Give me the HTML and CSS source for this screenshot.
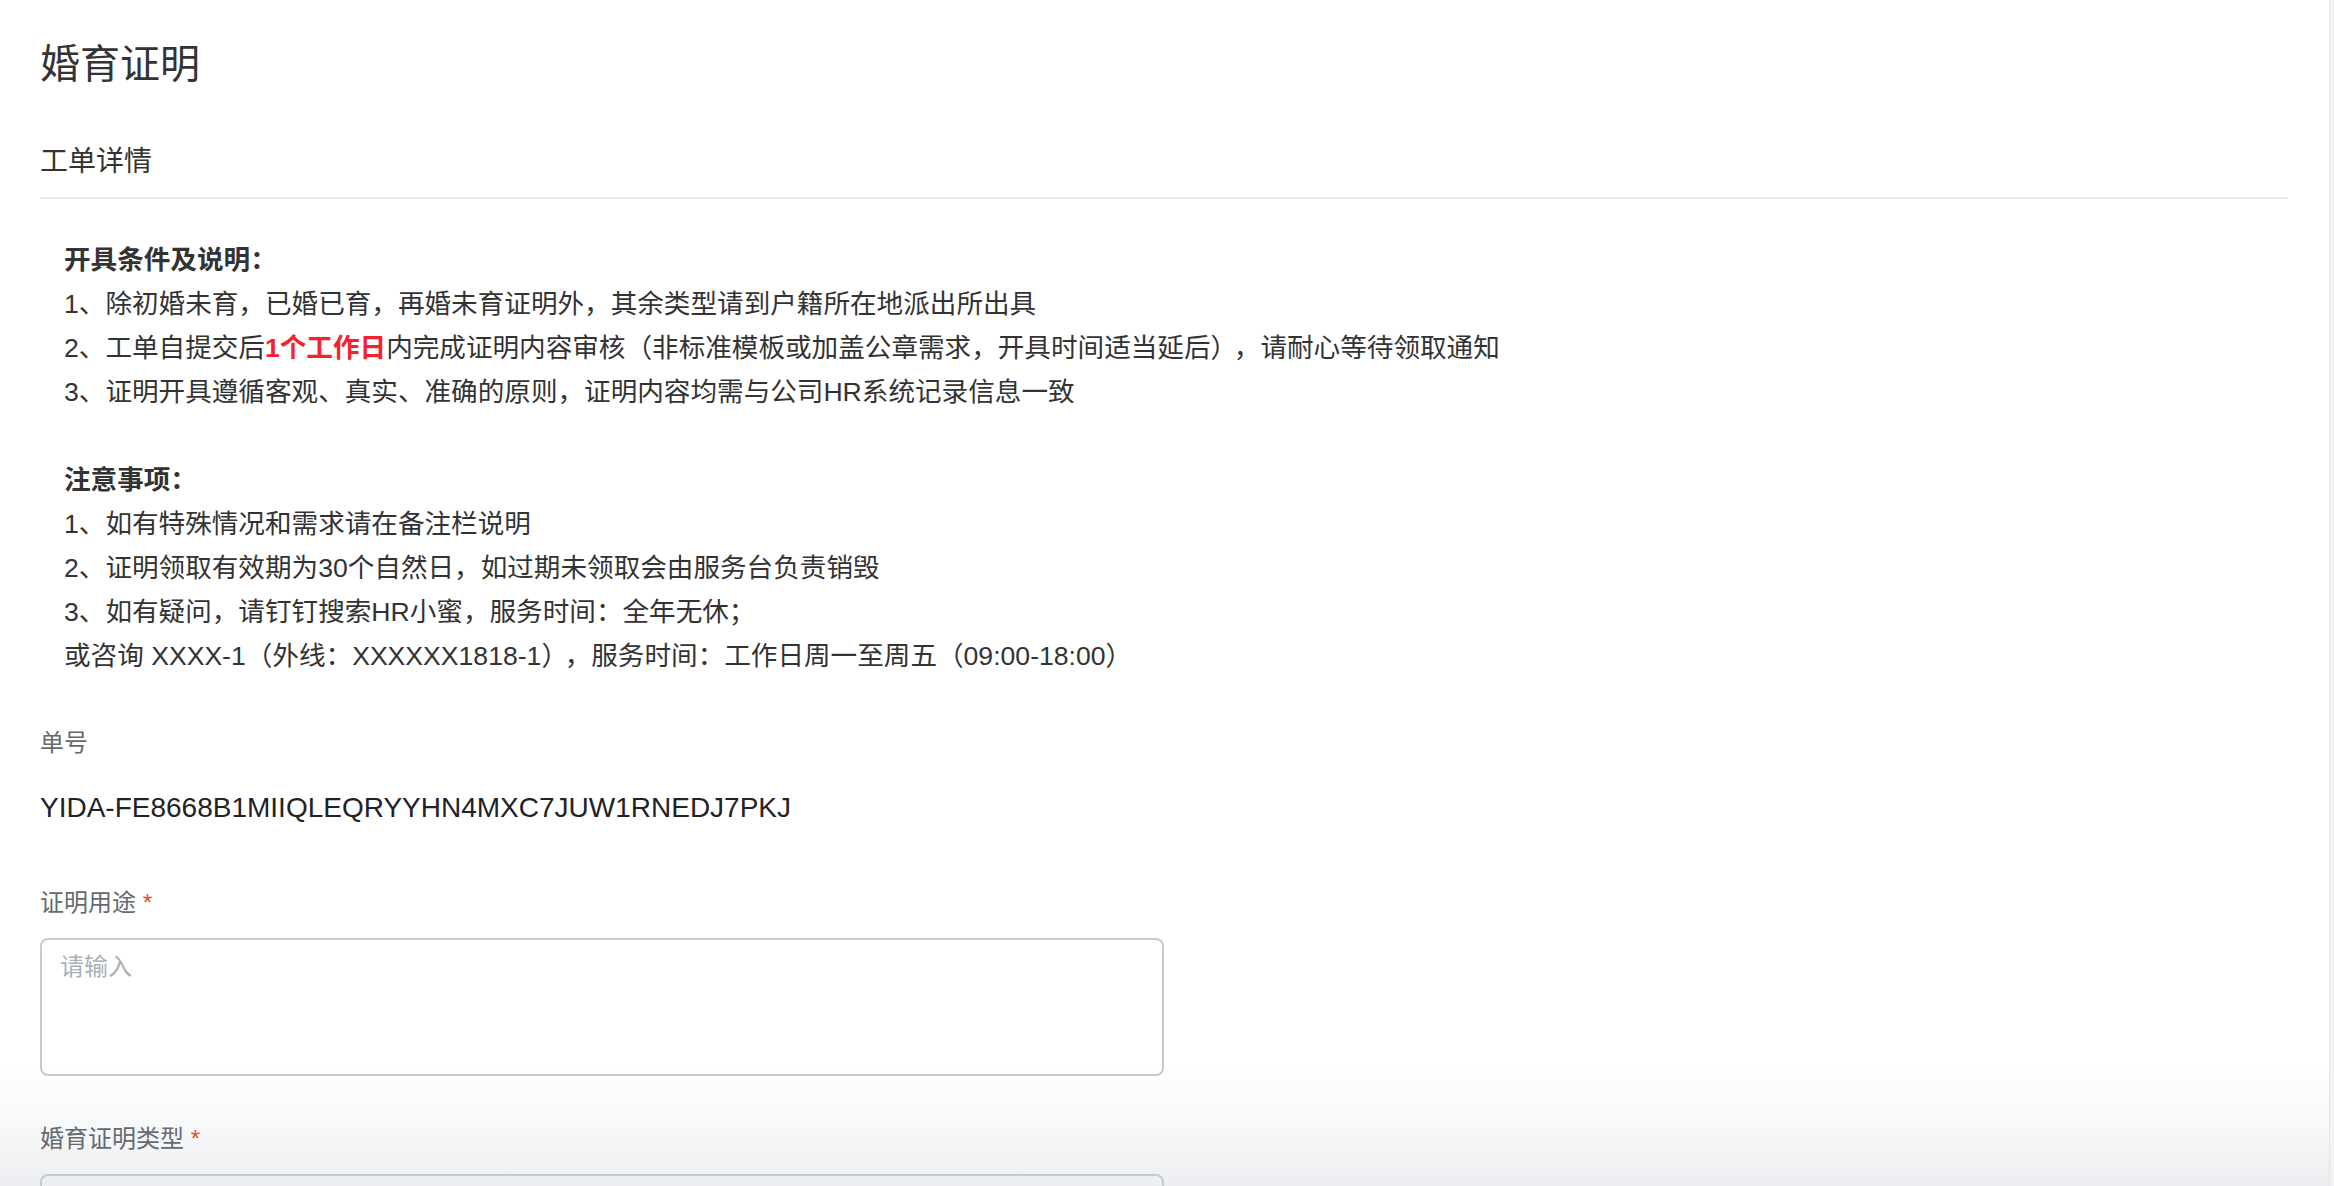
FILE: index.html
```html
<!DOCTYPE html>
<html lang="zh-CN">
<head>
<meta charset="utf-8">
<title>婚育证明</title>
<link rel="stylesheet" href="styles.css">
</head>
<body>
<div class="frame">
  <main class="page">
    <h1 class="title">婚育证明</h1>
    <div class="section-head">工单详情</div>
    <div class="notice">
      <div class="notice-title">开具条件及说明：</div>
      <div>1、除初婚未育，已婚已育，再婚未育证明外，其余类型请到户籍所在地派出所出具</div>
      <div>2、工单自提交后<span class="hl">1个工作日</span>内完成证明内容审核（非标准模板或加盖公章需求，开具时间适当延后）<span class="gap">，</span>请耐心等待领取通知</div>
      <div>3、证明开具遵循客观、真实、准确的原则，证明内容均需与公司HR系统记录信息一致</div>
      <div class="blank">&nbsp;</div>
      <div class="notice-title">注意事项：</div>
      <div>1、如有特殊情况和需求请在备注栏说明</div>
      <div>2、证明领取有效期为30个自然日，如过期未领取会由服务台负责销毁</div>
      <div>3、如有疑问，请钉钉搜索HR小蜜，服务时间：全年无休；</div>
      <div>或咨询 XXXX-1（外线：XXXXXX1818-1）<span class="gap">，</span>服务时间：工作日周一至周五（09:00-18:00）</div>
    </div>
    <div class="field field-id">
      <div class="label">单号</div>
      <div class="value">YIDA-FE8668B1MIIQLEQRYYHN4MXC7JUW1RNEDJ7PKJ</div>
    </div>
    <div class="field field-use">
      <div class="label">证明用途 <span class="req">*</span></div>
      <div class="textarea"><span class="placeholder">请输入</span></div>
    </div>
    <div class="field field-type">
      <div class="label">婚育证明类型 <span class="req">*</span></div>
      <div class="select"></div>
    </div>
  </main>
  <div class="scrollbar"></div>
</div>
</body>
</html>
```
FILE: styles.css
```css
html, body {
  margin: 0;
  padding: 0;
  background: #ffffff;
  overflow: hidden;
  height: 1186px;
}
body {
  font-family: "Liberation Sans", "Noto Sans CJK SC", sans-serif;
  color: #333333;
}
.frame {
  display: flex;
  height: 1186px;
  background: linear-gradient(to bottom, #ffffff 0px, #ffffff 1060px, #f8f9fa 1120px, #eceef1 1186px);
}
.page {
  flex: 1;
  padding: 0 41px 0 40px;
  overflow: hidden;
}
.scrollbar {
  width: 4px;
  background: #f3f3f3;
  border-left: 1px solid #e4e4e4;
}
.title {
  margin: 36px 0 0;
  font-size: 40px;
  line-height: 56px;
  font-weight: normal;
  color: #333333;
}
.section-head {
  margin-top: 50px;
  font-size: 28px;
  line-height: 40px;
  padding-bottom: 15px;
  border-bottom: 2px solid #e8e8e8;
  color: #333333;
}
.notice {
  margin-top: 39px;
  padding-left: 24px;
  font-size: 26.6px;
  line-height: 44px;
  color: #333333;
  white-space: nowrap;
}
.notice-title {
  font-weight: bold;
}
.gap {
  margin-left: 10px;
}
.hl {
  color: #f5222d;
  font-weight: bold;
}
.field {
  display: flex;
  flex-direction: column;
}
.field-id {
  margin-top: 48px;
}
.field-use {
  margin-top: 58px;
}
.field-type {
  margin-top: 46px;
}
.label {
  font-size: 24px;
  line-height: 34px;
  color: #666a6e;
}
.req {
  color: #f04631;
}
.value {
  margin-top: 28px;
  font-size: 28px;
  line-height: 40px;
  color: #1f2226;
}
.textarea {
  margin-top: 18px;
  width: 1120px;
  height: 134px;
  border: 2px solid #c4cacf;
  border-radius: 8px;
}
.placeholder {
  display: block;
  margin: 10px 0 0 18px;
  font-size: 24px;
  line-height: 34px;
  color: #a9b0b8;
}
.select {
  margin-top: 18px;
  width: 1120px;
  height: 60px;
  border: 2px solid #c4cacf;
  border-radius: 8px;
}
```
